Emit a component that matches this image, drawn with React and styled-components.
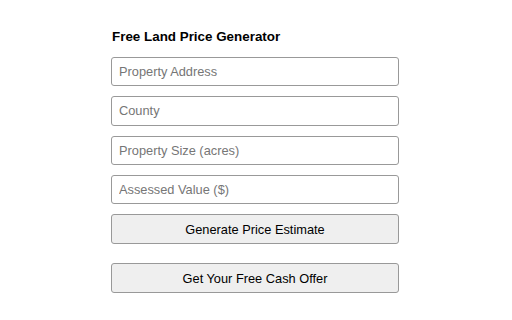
import React from 'react';
import styled, { createGlobalStyle } from 'styled-components';

const GlobalStyle = createGlobalStyle`
body {
    margin:0;
    background:#fff;
    font-family:"Liberation Sans", Arial, sans-serif;
}
`;

const fields = [
    'Property Address',
    'County',
    'Property Size (acres)',
    'Assessed Value ($)',
];

const App = () => {
    return (
        <Page>
            <GlobalStyle />
            <Generator>
                <Title>Free Land Price Generator</Title>
                <Form onSubmit={e => e.preventDefault()}>
                    {fields.map(f => (
                        <Field key={f} type="text" placeholder={f} />
                    ))}
                    <Button type="submit">Generate Price Estimate</Button>
                    <Button type="button" spaced>Get Your Free Cash Offer</Button>
                </Form>
            </Generator>
        </Page>
    )
}

export default App


const Page = styled.div`
width:100%;
display:flex;
justify-content:center;
padding:29px 2px 0 0;
box-sizing:border-box;
`;

const Generator = styled.div`
width:288px;
display:flex;
flex-direction:column;
`;

const Title = styled.h3`
margin:0 0 12px 1px;
font-size:13.4px;
line-height:16px;
font-weight:bold;
color:#000;
`;

const Form = styled.form`
display:flex;
flex-direction:column;
gap:10px;
`;

const Field = styled.input`
box-sizing:border-box;
width:100%;
height:29.25px;
padding:0 7px;
border:1px solid #999;
border-radius:3px;
font-family:"Liberation Sans", Arial, sans-serif;
font-size:12.8px;
color:#000;
background:#fff;
outline:none;
&::placeholder{
    color:#767676;
}
`;

const Button = styled.button`
box-sizing:border-box;
width:100%;
height:30px;
margin-top:${props => props.spaced ? '9px' : '0'};
border:1px solid #999;
border-radius:3px;
background:#efefef;
font-family:"Liberation Sans", Arial, sans-serif;
font-size:12.8px;
color:#000;
cursor:pointer;
`;
